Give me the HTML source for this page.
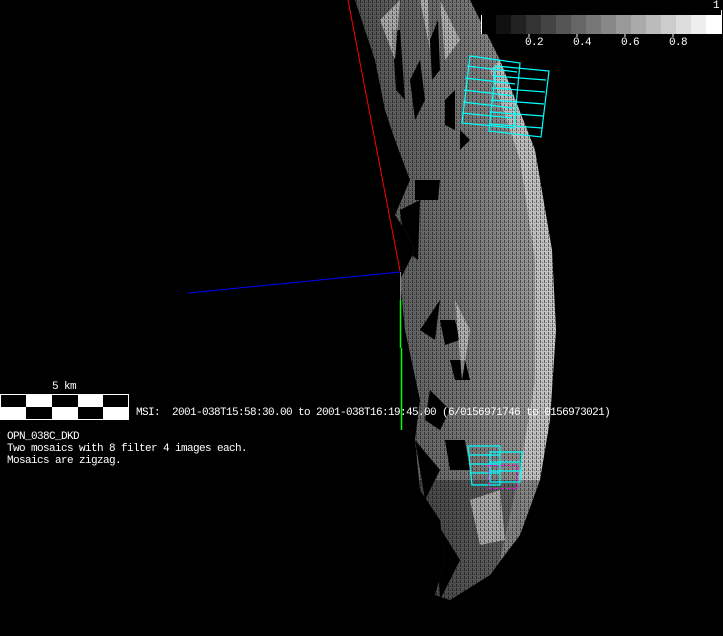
<!DOCTYPE html>
<html><head><meta charset="utf-8"><style>
html,body{margin:0;padding:0;background:#000;width:723px;height:636px;overflow:hidden;position:relative}
.t{position:absolute;color:#fff;font-family:"Liberation Mono",monospace;font-size:11px;letter-spacing:-0.6px;line-height:12px;white-space:pre}
</style></head><body>
<svg width="723" height="636" style="position:absolute;left:0;top:0">
<defs>
<linearGradient id="g" x1="0" y1="0" x2="1" y2="0">
<stop offset="0" stop-color="#4a4a4a"/><stop offset="0.5" stop-color="#707070"/><stop offset="1" stop-color="#a8a8a8"/>
</linearGradient>
<pattern id="p" width="4" height="4" patternUnits="userSpaceOnUse">
<rect width="1" height="3" fill="#000" opacity="0.5"/><rect x="2" y="2" width="1" height="1" fill="#000" opacity="0.4"/>
</pattern>
<clipPath id="c"><path d="M355,0 L470,0 L500,60 L535,150 L552,250 L556,330 L550,420 L540,480 L520,535 L490,575 L450,600 L435,595 L445,560 L440,520 L420,490 L415,440 L420,400 L405,330 L400,280 L415,250 L405,230 L395,215 L410,180 L395,140 L385,110 L375,60 Z"/></clipPath>
</defs>
<g clip-path="url(#c)">
<rect x="340" y="0" width="230" height="610" fill="url(#g)"/>
<path d="M500,60 L535,150 L552,250 L556,330 L550,420 L540,480 L520,535 L500,560 L520,470 L535,380 L535,260 L520,160 L490,70 Z" fill="#d8d8d8" opacity="0.6"/>
<rect x="340" y="480" width="230" height="130" fill="#000" opacity="0.3"/>
<g fill="#000">
<polygon points="392,30 400,30 405,100 396,90"/>
<polygon points="410,80 420,60 425,100 415,120"/>
<polygon points="445,100 455,90 455,130 445,125"/>
<polygon points="430,40 438,20 440,70 432,80"/>
<polygon points="460,130 470,140 460,150"/>
<polygon points="415,180 440,180 438,200 415,200"/>
<polygon points="400,210 420,200 418,260 405,250"/>
<polygon points="440,320 455,320 460,340 445,345"/>
<polygon points="450,360 465,360 470,380 455,380"/>
<polygon points="420,330 440,300 435,340"/>
<polygon points="430,390 450,410 440,430 425,420"/>
<polygon points="445,440 465,440 470,470 450,470"/>
<polygon points="415,440 440,470 425,500"/>
<polygon points="435,520 460,560 440,600"/>
</g>
<g fill="#c8c8c8" opacity="0.7">
<polygon points="380,20 400,0 395,60"/>
<polygon points="440,0 460,40 445,60"/>
<polygon points="420,0 428,0 430,50"/>
<polygon points="470,500 500,490 505,540 480,545"/>
<polygon points="455,300 470,330 462,380"/>
</g>
<rect x="340" y="0" width="230" height="610" fill="url(#p)"/>
</g>
<line x1="348" y1="0" x2="400" y2="271" stroke="#f00" stroke-width="1"/>
<line x1="188" y1="293" x2="400" y2="272" stroke="#00f" stroke-width="1"/>
<line x1="400.5" y1="272" x2="400.5" y2="300" stroke="#888"/>
<line x1="400.5" y1="300" x2="400.5" y2="348" stroke="#0f0" stroke-width="1.5"/>
<line x1="401.5" y1="348" x2="401.5" y2="430" stroke="#0f0" stroke-width="1.5"/>
<g fill="none" stroke="#0ff" stroke-width="1.2">
<path d="M470,56 L520,63 L514,128 L462,123 Z"/>
<path d="M496,66 L549,71 L541,137 L489,131 Z"/>
<path d="M467,66 L517,72 M465,78 L515,84 M464,90 L514,96 M463,102 L513,108 M462,113 L512,118"/>
<path d="M493,76 L546,80 M492,88 L545,92 M491,100 L544,104 M490,112 L543,116 M489,124 L542,128"/>
<path d="M468,446 L500,446 L500,485 L472,485 Z"/>
<path d="M490,452 L522,452 L520,482 L490,482 Z"/>
<path d="M470,455 L500,455 M470,464 L500,464 M470,473 L500,473 M490,462 L520,462 M490,471 L520,471"/>
</g>
<rect x="488.5" y="465.5" width="29" height="23" fill="none" stroke="#f0f" stroke-dasharray="3,3"/>
<g>
<rect x="481" y="15" width="15" height="19" fill="#000"/>
<rect x="496" y="15" width="15" height="19" fill="#111"/>
<rect x="511" y="15" width="15" height="19" fill="#222"/>
<rect x="526" y="15" width="15" height="19" fill="#333"/>
<rect x="541" y="15" width="15" height="19" fill="#444"/>
<rect x="556" y="15" width="15" height="19" fill="#555"/>
<rect x="571" y="15" width="15" height="19" fill="#666"/>
<rect x="586" y="15" width="15" height="19" fill="#777"/>
<rect x="601" y="15" width="15" height="19" fill="#888"/>
<rect x="616" y="15" width="15" height="19" fill="#999"/>
<rect x="631" y="15" width="15" height="19" fill="#aaa"/>
<rect x="646" y="15" width="15" height="19" fill="#bbb"/>
<rect x="661" y="15" width="15" height="19" fill="#ccc"/>
<rect x="676" y="15" width="15" height="19" fill="#ddd"/>
<rect x="691" y="15" width="15" height="19" fill="#eee"/>
<rect x="706" y="15" width="15" height="19" fill="#fff"/>
<line x1="481.5" y1="15" x2="481.5" y2="34" stroke="#fff"/>
<line x1="721.5" y1="10" x2="721.5" y2="34" stroke="#fff"/>
<path d="M529,34v3 M577,34v3 M625,34v3 M673,34v3" stroke="#fff"/>
</g>
<rect x="0.5" y="394.5" width="128" height="25" fill="#fff" stroke="#fff"/>
<rect x="1" y="395" width="25" height="12" fill="#000"/>
<rect x="52" y="395" width="26" height="12" fill="#000"/>
<rect x="103" y="395" width="25" height="12" fill="#000"/>
<rect x="26" y="407" width="26" height="12" fill="#000"/>
<rect x="78" y="407" width="25" height="12" fill="#000"/>
</svg>
<div class="t" style="left:713px;top:0px">1</div>
<div class="t" style="left:525px;top:37px">0.2</div>
<div class="t" style="left:573px;top:37px">0.4</div>
<div class="t" style="left:621px;top:37px">0.6</div>
<div class="t" style="left:669px;top:37px">0.8</div>
<div class="t" style="left:52px;top:381px">5 km</div>
<div class="t" style="left:136px;top:407px">MSI:  2001-038T15:58:30.00 to 2001-038T16:19:45.00 (6/0156971746 to 0156973021)</div>
<div class="t" style="left:7px;top:431px">OPN_038C_DKD
Two mosaics with 8 filter 4 images each.
Mosaics are zigzag.</div>
</body></html>
